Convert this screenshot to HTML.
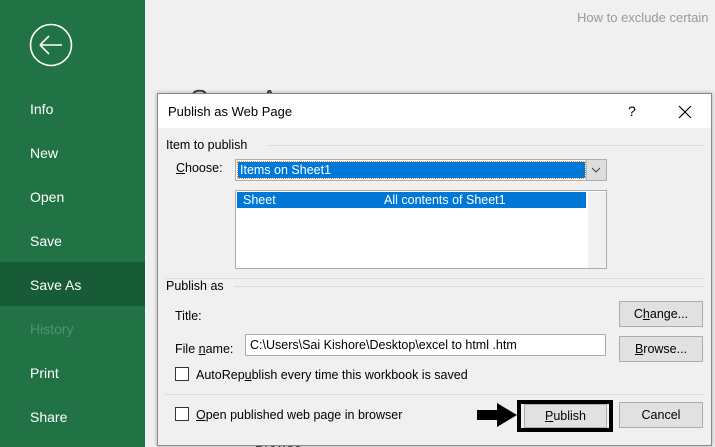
<!DOCTYPE html>
<html style="width:715px;height:447px;overflow:hidden"><head><style>
*{margin:0;padding:0;box-sizing:border-box}
body{width:715px;height:447px;overflow:hidden;background:#f0f0f0;position:relative;font-family:"Liberation Sans",sans-serif;font-size:12px;color:#000}
.a{position:absolute}
#side{left:0;top:0;width:145px;height:447px;background:#217346}
.nav{position:absolute;left:30px;color:#fff;font-size:14px}
.btn{position:absolute;background:#e1e1e1;border:1px solid #adadad;text-align:center;font-size:12.5px;line-height:24px}
.cb{position:absolute;width:14px;height:14px;border:1px solid #333;background:#fff}
.lbl{position:absolute;font-size:12.5px}
.line{position:absolute;height:1px;background:#dcdcdc}
</style></head><body>
<div id="side" class="a">
<svg class="a" style="left:28px;top:22px" width="46" height="46"><circle cx="23" cy="23" r="20.5" fill="none" stroke="#fff" stroke-width="1.6"/><path d="M12 23H34M12 23L21 14M12 23L21 32" fill="none" stroke="#fff" stroke-width="1.6"/></svg>
<div class="nav" style="top:101px">Info</div>
<div class="nav" style="top:145px">New</div>
<div class="nav" style="top:189px">Open</div>
<div class="nav" style="top:233px">Save</div>
<div class="a" style="left:0;top:262px;width:145px;height:44px;background:#185c37"></div>
<div class="nav" style="top:277px">Save As</div>
<div class="nav" style="top:321px;color:#4f9470">History</div>
<div class="nav" style="top:365px">Print</div>
<div class="nav" style="top:409px">Share</div>
</div>
<div class="a" style="left:577px;top:10px;color:#999;font-size:13px;white-space:nowrap">How to exclude certain</div>
<div class="a" style="left:190px;top:84px;font-size:28px;color:#444">Save As</div>
<div class="a" style="left:255px;top:434px;height:13px;overflow:hidden;font-size:14px;line-height:16px;color:#444">Browse</div>
<div class="a" style="left:157px;top:93px;width:555px;height:353px;background:#f0f0f0;border:1px solid #888;box-shadow:0 0 4px rgba(0,0,0,.3)">
 <div class="a" style="left:0;top:0;width:553px;height:34px;background:#fff"></div>
 <div class="lbl" style="left:10px;top:10px;font-size:13px">Publish as Web Page</div>
 <div class="lbl" style="left:470px;top:9px;font-size:14px">?</div>
 <svg class="a" style="left:520px;top:11px" width="14" height="14"><path d="M1 1L13 13M13 1L1 13" stroke="#000" stroke-width="1.2"/></svg>
 <div class="lbl" style="left:8px;top:44px">Item to publish</div>
 <div class="line" style="left:110px;top:51px;width:436px"></div>
 <div class="lbl" style="left:18px;top:67px"><u>C</u>hoose:</div>
 <div class="a" style="left:77px;top:65px;width:372px;height:22px;background:#fff;border:1px solid #adadad"></div>
 <div class="a" style="left:80px;top:68px;width:347px;height:16px;background:#0078d7;color:#fff;font-size:12.5px;padding-left:2px;line-height:16px;outline:1px dotted #e08a3a">Items on Sheet1</div>
 <div class="a" style="left:428px;top:66px;width:20px;height:20px;background:#ddd;border-left:1px solid #bbb"></div>
 <svg class="a" style="left:433px;top:72px" width="10" height="8"><path d="M1 2L5 6L9 2" fill="none" stroke="#444"/></svg>
 <div class="a" style="left:77px;top:96px;width:372px;height:79px;background:#fff;border:1px solid #adadad"></div>
 <div class="a" style="left:79px;top:98px;width:349px;height:16px;background:#0078d7;color:#fff;font-size:12.5px;line-height:16px"><span style="margin-left:6px">Sheet</span><span class="a" style="left:147px">All contents of Sheet1</span></div>
 <div class="a" style="left:430px;top:98px;width:18px;height:76px;background:#f0f0f0"></div>
 <div class="line" style="left:7px;top:184px;width:540px"></div>
 <div class="lbl" style="left:8px;top:185px">Publish as</div>
 <div class="line" style="left:76px;top:192px;width:470px"></div>
 <div class="lbl" style="left:17px;top:215px">Title:</div>
 <div class="btn" style="left:461px;top:207px;width:84px;height:26px">C<u>h</u>ange...</div>
 <div class="lbl" style="left:17px;top:248px">File <u>n</u>ame:</div>
 <div class="a" style="left:87px;top:240px;width:361px;height:22px;background:#fff;border:1px solid #adadad;font-size:12.5px;line-height:20px;padding-left:4px">C:\Users\Sai Kishore\Desktop\excel to html .htm</div>
 <div class="btn" style="left:461px;top:242px;width:84px;height:26px"><u>B</u>rowse...</div>
 <div class="cb" style="left:17px;top:273px"></div>
 <div class="lbl" style="left:38px;top:274px">AutoRep<u>u</u>blish every time this workbook is saved</div>
 <div class="line" style="left:7px;top:300px;width:540px"></div>
 <div class="cb" style="left:17px;top:313px"></div>
 <div class="lbl" style="left:38px;top:314px"><u>O</u>pen published web page in browser</div>
 <svg class="a" style="left:317px;top:307px" width="45" height="28"><path d="M2 9H22V2L42 14L22 26V19H2Z" fill="#000"/></svg>
 <div class="a" style="left:359px;top:306px;width:96px;height:32px;border:4px solid #000"></div>
 <div class="btn" style="left:366px;top:310px;width:83px;height:24px;line-height:22px"><u>P</u>ublish</div>
 <div class="btn" style="left:461px;top:308px;width:84px;height:26px">Cancel</div>
</div>
</body></html>
